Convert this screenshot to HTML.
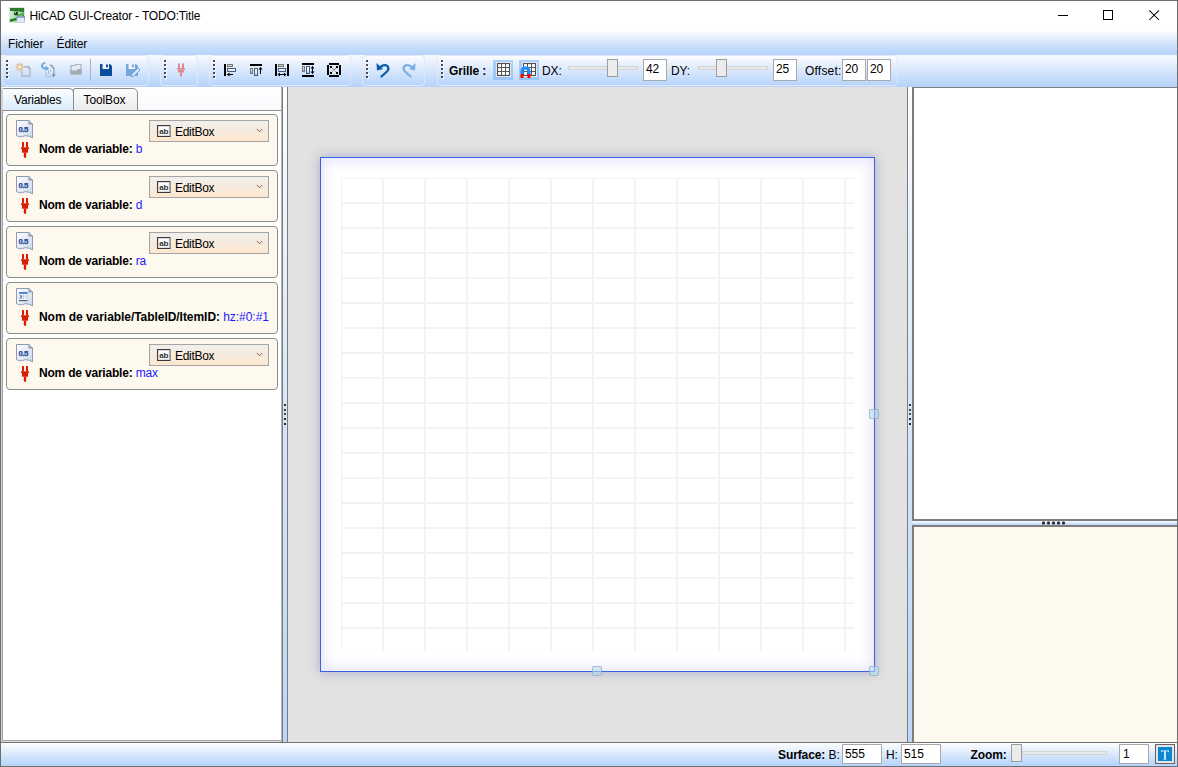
<!DOCTYPE html>
<html><head><meta charset="utf-8">
<style>
*{box-sizing:border-box;margin:0;padding:0}
html,body{width:1178px;height:767px;overflow:hidden;background:#fff}
body{position:relative;font-family:"Liberation Sans",sans-serif;font-size:12px;color:#000;letter-spacing:-0.1px}
.a{position:absolute}
svg.a{overflow:visible}
.t{position:absolute;white-space:nowrap;line-height:12px;height:12px}
.b{font-weight:bold}
.frame{left:0;top:0;width:1178px;height:767px;border:1px solid #6f6f6f;z-index:50;pointer-events:none}
.menubar{left:1px;top:31px;width:1176px;height:24px;background:linear-gradient(#fcfdff 0%,#e3eefd 30%,#c9defb 65%,#b4d3fb 100%)}
.toolbar{left:1px;top:55px;width:1176px;height:32px;background:linear-gradient(#f7fbff 0%,#dce9fc 40%,#b4d3fb 100%)}
.grp{top:0px;height:31px;border:1px solid #e6e6f6;border-radius:4px;background:linear-gradient(#fcfdff 0%,#e6effd 30%,#cfe2fc 65%,#b5d4fb 100%)}
.grip{width:3px;height:19px;background:repeating-linear-gradient(#505050 0 2px,transparent 2px 4px);-webkit-mask:linear-gradient(90deg,#000 2px,transparent 2px)}
.canvas{left:288px;top:87px;width:619px;height:655px;background:#e2e2e2}
.status{left:1px;top:742px;width:1176px;height:24px;border-top:1px solid #747474;background:linear-gradient(#fdfeff 0%,#e8f1fd 30%,#cbe0fc 68%,#b4d4fc 100%)}
.card{left:6px;width:272px;height:52px;border:1px solid #8c8c8c;border-radius:4px;background:#fef9ee}
.dd{left:142px;top:5px;width:120px;height:22px;border:1px solid #a5a5a5;background:linear-gradient(#f1efec,#fce7cf)}
.val{color:#1a1aff}
.tb{position:absolute;background:#fff;border:1px solid #a9a9a9}
.trk{position:absolute;height:4px;background:#e6e8ea;border:1px solid #d4d4d4}
.thumb{position:absolute;width:11px;height:18px;background:#ececec;border:1px solid #9c9c9c}
</style></head>
<body>
<div class="a frame"></div>
<!-- ============ title bar ============ -->
<svg class="a" style="left:9px;top:7px" width="16" height="16" viewBox="0 0 16 16">
  <defs><linearGradient id="gi" x1="0" y1="0" x2="1" y2="1"><stop offset="0" stop-color="#e6f6e6"/><stop offset=".5" stop-color="#b4e0b4"/><stop offset="1" stop-color="#7cc87c"/></linearGradient>
  <linearGradient id="gw" x1="0" y1="0" x2="0" y2="1"><stop offset="0" stop-color="#7f9fc4"/><stop offset="1" stop-color="#c8d4e2"/></linearGradient></defs>
  <rect x="0" y="0" width="16" height="16" fill="#d4eed4"/>
  <rect x="1" y="1" width="14" height="14" fill="url(#gi)"/>
  <path d="M1 1H15V5Q9 4.5 1 4Z" fill="#2f7a2f"/>
  <path d="M8 8Q12 6 15 5V8Q11 9 8 10Z" fill="#3f9a3f" opacity=".7"/>
  <path d="M1 12.5Q7 11 15 8V10Q8 13.5 1 15Z" fill="#2a782a"/>
  <circle cx="7" cy="6.5" r="2.1" fill="#163816"/>
  <circle cx="6.4" cy="5.8" r=".7" fill="#cfe8cf"/>
  <rect x="7.5" y="9" width="8.5" height="7" fill="url(#gw)"/>
  <rect x="8.5" y="11" width="6.5" height="4" fill="#e4eaf2"/>
</svg>
<div class="t" style="left:29.5px;top:9.9px;letter-spacing:-0.17px">HiCAD GUI-Creator - TODO:Title</div>
<div class="a" style="left:1058px;top:15px;width:10px;height:1px;background:#000"></div>
<div class="a" style="left:1103px;top:10px;width:10px;height:10px;border:1px solid #000"></div>
<svg class="a" style="left:1149px;top:10px" width="11" height="11"><path d="M0.3 0.3L10 10M10 0.3L0.3 10" stroke="#000" stroke-width="1.05"/></svg>

<!-- ============ menu ============ -->
<div class="a menubar"></div>
<div class="t" style="left:8px;top:37.9px">Fichier</div>
<div class="t" style="left:56.5px;top:37.9px">Éditer</div>

<!-- ============ toolbar ============ -->
<div class="a toolbar">
  <div class="a grp" style="left:1px;width:147px"></div>
  <div class="a grp" style="left:159px;width:38px"></div>
  <div class="a grp" style="left:208px;width:142px"></div>
  <div class="a grp" style="left:361px;width:63px"></div>
  <div class="a grp" style="left:436px;width:461px"></div>
</div>
<svg class="a" style="left:6px;top:60px" width="4" height="19"><rect x="1" y="1" width="2" height="2" fill="#fff"/><rect x="0" y="0" width="2" height="2" fill="#4a4a4a"/><rect x="1" y="5" width="2" height="2" fill="#fff"/><rect x="0" y="4" width="2" height="2" fill="#4a4a4a"/><rect x="1" y="9" width="2" height="2" fill="#fff"/><rect x="0" y="8" width="2" height="2" fill="#4a4a4a"/><rect x="1" y="13" width="2" height="2" fill="#fff"/><rect x="0" y="12" width="2" height="2" fill="#4a4a4a"/><rect x="1" y="17" width="2" height="2" fill="#fff"/><rect x="0" y="16" width="2" height="2" fill="#4a4a4a"/></svg>
<svg class="a" style="left:164px;top:60px" width="4" height="19"><rect x="1" y="1" width="2" height="2" fill="#fff"/><rect x="0" y="0" width="2" height="2" fill="#4a4a4a"/><rect x="1" y="5" width="2" height="2" fill="#fff"/><rect x="0" y="4" width="2" height="2" fill="#4a4a4a"/><rect x="1" y="9" width="2" height="2" fill="#fff"/><rect x="0" y="8" width="2" height="2" fill="#4a4a4a"/><rect x="1" y="13" width="2" height="2" fill="#fff"/><rect x="0" y="12" width="2" height="2" fill="#4a4a4a"/><rect x="1" y="17" width="2" height="2" fill="#fff"/><rect x="0" y="16" width="2" height="2" fill="#4a4a4a"/></svg>
<svg class="a" style="left:213px;top:60px" width="4" height="19"><rect x="1" y="1" width="2" height="2" fill="#fff"/><rect x="0" y="0" width="2" height="2" fill="#4a4a4a"/><rect x="1" y="5" width="2" height="2" fill="#fff"/><rect x="0" y="4" width="2" height="2" fill="#4a4a4a"/><rect x="1" y="9" width="2" height="2" fill="#fff"/><rect x="0" y="8" width="2" height="2" fill="#4a4a4a"/><rect x="1" y="13" width="2" height="2" fill="#fff"/><rect x="0" y="12" width="2" height="2" fill="#4a4a4a"/><rect x="1" y="17" width="2" height="2" fill="#fff"/><rect x="0" y="16" width="2" height="2" fill="#4a4a4a"/></svg>
<svg class="a" style="left:366px;top:60px" width="4" height="19"><rect x="1" y="1" width="2" height="2" fill="#fff"/><rect x="0" y="0" width="2" height="2" fill="#4a4a4a"/><rect x="1" y="5" width="2" height="2" fill="#fff"/><rect x="0" y="4" width="2" height="2" fill="#4a4a4a"/><rect x="1" y="9" width="2" height="2" fill="#fff"/><rect x="0" y="8" width="2" height="2" fill="#4a4a4a"/><rect x="1" y="13" width="2" height="2" fill="#fff"/><rect x="0" y="12" width="2" height="2" fill="#4a4a4a"/><rect x="1" y="17" width="2" height="2" fill="#fff"/><rect x="0" y="16" width="2" height="2" fill="#4a4a4a"/></svg>
<svg class="a" style="left:441px;top:60px" width="4" height="19"><rect x="1" y="1" width="2" height="2" fill="#fff"/><rect x="0" y="0" width="2" height="2" fill="#4a4a4a"/><rect x="1" y="5" width="2" height="2" fill="#fff"/><rect x="0" y="4" width="2" height="2" fill="#4a4a4a"/><rect x="1" y="9" width="2" height="2" fill="#fff"/><rect x="0" y="8" width="2" height="2" fill="#4a4a4a"/><rect x="1" y="13" width="2" height="2" fill="#fff"/><rect x="0" y="12" width="2" height="2" fill="#4a4a4a"/><rect x="1" y="17" width="2" height="2" fill="#fff"/><rect x="0" y="16" width="2" height="2" fill="#4a4a4a"/></svg>
<!-- icon: new -->
<svg class="a" style="left:14px;top:61px" width="18" height="18" viewBox="0 0 18 18">
  <path d="M10 5.8H14.2L15.8 7.6V15.2H7.8V10" fill="none" stroke="#b3bfcd" stroke-width="1.7" stroke-linejoin="round"/>
  <path d="M13.6 5L16.4 8" stroke="#a6b2c0" stroke-width="1.2"/>
  <g stroke="#dcc08e" stroke-width="1.5" stroke-linecap="round">
    <path d="M5.7 2.2V9.8M1.9 6H9.5M3 3.3L8.4 8.7M8.4 3.3L3 8.7"/>
  </g>
  <circle cx="5.7" cy="6" r="1.5" fill="#fbf3e4"/>
</svg>
<!-- icon: move/copy -->
<svg class="a" style="left:40px;top:61px" width="18" height="18" viewBox="0 0 18 18">
  <path d="M4.5 2Q1.8 2.8 2 5.2Q2.6 7.6 6 7.5" fill="none" stroke="#6aa4dc" stroke-width="1.8" stroke-linecap="round"/>
  <path d="M5.5 4.6L9 7.5L5.5 10.2Z" fill="#6aa4dc"/>
  <path d="M9.5 4.3H11.2L14 8V14.5" fill="none" stroke="#a9b1bb" stroke-width="1.5"/>
  <path d="M11.5 4.3L14 7.5" stroke="#9aa4ae" stroke-width="1.6"/>
  <path d="M6 11V15.5H11" fill="none" stroke="#c0c7d0" stroke-width="1.6"/>
  <rect x="8" y="9.5" width="1" height="1" fill="#8a949e"/><rect x="10" y="9.5" width="1" height="1" fill="#8a949e"/><rect x="8" y="11.5" width="1" height="1" fill="#8a949e"/>
  <rect x="13" y="12.5" width="1" height="4" fill="#7f8a95"/><rect x="11.5" y="13.5" width="4" height="1" fill="#7f8a95"/>
</svg>
<!-- icon: open folder -->
<svg class="a" style="left:68px;top:63px" width="15" height="14" viewBox="0 0 15 14">
  <path d="M3 4V2.5H7L8 1.5H13V11H3Z" fill="#e6ecf4" stroke="#aab2bc" stroke-width="1.2"/>
  <path d="M1.5 7.5H8.5L10 6H13.5V11.5H3Z" fill="#a3abb5"/>
</svg>
<div class="a" style="left:90px;top:59px;width:1px;height:22px;background:#a7b2c2"></div>
<!-- icon: save -->
<svg class="a" style="left:99px;top:63px" width="14" height="14" viewBox="0 0 14 14">
  <path d="M1 1H11L13 3V13H1Z" fill="#0a4f9e"/>
  <rect x="3.5" y="1" width="6.5" height="5" fill="#f2f6fb"/>
  <rect x="7" y="1.5" width="2" height="2.8" fill="#0a4f9e"/>
</svg>
<!-- icon: save as -->
<svg class="a" style="left:125px;top:63px" width="16" height="15" viewBox="0 0 16 15">
  <path d="M1 1H11L13 3V13H1Z" fill="#76a6da"/>
  <rect x="3.5" y="1" width="6.5" height="5" fill="#eef4fb"/>
  <rect x="7" y="1.5" width="2" height="2.8" fill="#76a6da"/>
  <path d="M6 14L7 11L13 5L15 7L9 13Z" fill="#dbe8f6" stroke="#76a6da" stroke-width="1"/>
</svg>
<!-- icon: plug disabled -->
<svg class="a" style="left:177px;top:63px" width="8" height="14" viewBox="0 0 8 14">
  <g fill="#e0878e">
    <rect x="1" y="0.5" width="2" height="4.5"/><rect x="5" y="0.5" width="2" height="4.5"/>
    <rect x="0" y="5" width="8" height="1.5"/><rect x="1" y="6.5" width="6" height="3"/>
    <rect x="3" y="9.5" width="2" height="4"/>
  </g>
</svg>
<!-- align icons -->
<svg class="a" style="left:222px;top:62px" width="16" height="16" viewBox="0 0 16 16">
  <defs>
    <linearGradient id="gg" x1="0" y1="0" x2="0" y2="1"><stop offset="0" stop-color="#ffffff"/><stop offset="1" stop-color="#9a9a9a"/></linearGradient>
    <linearGradient id="gb" x1="0" y1="0" x2="0" y2="1"><stop offset="0" stop-color="#ffffff"/><stop offset=".6" stop-color="#eef2f8"/><stop offset="1" stop-color="#8fa6c4"/></linearGradient>
  </defs>
  <rect x="2" y="2" width="2" height="12" fill="#000"/>
  <rect x="5.5" y="2.5" width="5" height="2" fill="url(#gg)" stroke="#7a7a7a" stroke-width="1"/>
  <rect x="5.5" y="6.5" width="8" height="3" fill="url(#gb)" stroke="#3f5f85" stroke-width="1"/>
  <path d="M5 12.5H11" stroke="#000" stroke-width="1"/><path d="M5 12.5L7.5 10.5V14.5Z" fill="#000"/>
</svg>
<svg class="a" style="left:249px;top:62px" width="15" height="16" viewBox="0 0 15 16">
  <rect x="1" y="2" width="12" height="2" fill="#000"/>
  <rect x="1.5" y="6.5" width="2" height="5" fill="url(#gg)" stroke="#7a7a7a" stroke-width="1"/>
  <rect x="5.5" y="6.5" width="3" height="7" fill="url(#gb)" stroke="#3f5f85" stroke-width="1"/>
  <path d="M11.5 5.5V12" stroke="#000" stroke-width="1"/><path d="M9.5 7.5L11.5 5L13.5 7.5Z" fill="#000"/>
</svg>
<svg class="a" style="left:273px;top:62px" width="18" height="16" viewBox="0 0 18 16">
  <rect x="2" y="2" width="2" height="12" fill="#000"/><rect x="14" y="2" width="2" height="12" fill="#000"/>
  <rect x="5.5" y="2.5" width="5" height="2" fill="url(#gg)" stroke="#7a7a7a" stroke-width="1"/>
  <rect x="5.5" y="6.5" width="7" height="3" fill="url(#gb)" stroke="#3f5f85" stroke-width="1"/>
  <path d="M5 12.5H13" stroke="#000" stroke-width="1"/><path d="M4.5 12.5L7 10.5V14.5Z M13.5 12.5L11 10.5V14.5Z" fill="#000"/>
</svg>
<svg class="a" style="left:300px;top:62px" width="16" height="16" viewBox="0 0 16 16">
  <rect x="2" y="1" width="12" height="2" fill="#000"/><rect x="2" y="13" width="12" height="2" fill="#000"/>
  <rect x="2.5" y="4.5" width="2" height="5" fill="url(#gg)" stroke="#7a7a7a" stroke-width="1"/>
  <rect x="6.5" y="4.5" width="3" height="7" fill="url(#gb)" stroke="#3f5f85" stroke-width="1"/>
  <path d="M12.5 4.5V11.5" stroke="#000" stroke-width="1"/><path d="M10.5 6.5L12.5 4L14.5 6.5Z M10.5 9.5L12.5 12L14.5 9.5Z" fill="#000"/>
</svg>
<svg class="a" style="left:326px;top:62px" width="16" height="16" viewBox="0 0 16 16">
  <rect x="3" y="1" width="10" height="2" fill="#000"/><rect x="3" y="13" width="10" height="2" fill="#000"/>
  <rect x="1" y="3" width="2" height="10" fill="#000"/><rect x="13" y="3" width="2" height="10" fill="#000"/>
  <rect x="4" y="4" width="8" height="8" fill="#dfe6ef"/>
  <path d="M4.5 4.5L11.5 11.5M11.5 4.5L4.5 11.5" stroke="#555" stroke-width="1" stroke-dasharray="1 1"/>
  <rect x="4" y="4" width="2" height="2" fill="#000"/><rect x="10" y="4" width="2" height="2" fill="#000"/>
  <rect x="4" y="10" width="2" height="2" fill="#000"/><rect x="10" y="10" width="2" height="2" fill="#000"/>
</svg>
<!-- undo / redo -->
<svg class="a" style="left:375px;top:62px" width="16" height="16" viewBox="0 0 16 16">
  <path d="M5 5.2Q9.5 1.5 12.6 4.2Q14.5 6.5 12 9.5L6.5 14.5" fill="none" stroke="#0b5cb0" stroke-width="2.2" stroke-linecap="round"/>
  <path d="M1.5 1L2 8.5L8 7Z" fill="#0b5cb0"/>
</svg>
<svg class="a" style="left:401px;top:62px" width="16" height="16" viewBox="0 0 16 16">
  <path d="M11 5.2Q6.5 1.5 3.4 4.2Q1.5 6.5 4 9.5L9.5 14.5" fill="none" stroke="#7eaee0" stroke-width="2.2" stroke-linecap="round"/>
  <path d="M14.5 1L14 8.5L8 7Z" fill="#7eaee0"/>
</svg>
<!-- grille -->
<div class="t b" style="left:449px;top:65px">Grille :</div>
<div class="a" style="left:493px;top:60px;width:20px;height:20px;background:linear-gradient(#acd0fa,#9ac5f7)"></div>
<div class="a" style="left:519px;top:60px;width:20px;height:20px;background:linear-gradient(#acd0fa,#9ac5f7)"></div>
<svg class="a" style="left:496px;top:62px" width="15" height="15" viewBox="0 0 15 15">
  <rect x="0" y="0" width="15" height="15" fill="#fff" opacity=".85"/>
  <rect x="1.5" y="1.5" width="12" height="12" fill="#fff" stroke="#505050" stroke-width="1.2"/>
  <path d="M5.5 1.5V13.5M9.5 1.5V13.5M1.5 5.5H13.5M1.5 9.5H13.5" stroke="#555" stroke-width="1"/>
</svg>
<svg class="a" style="left:522px;top:62px" width="15" height="17" viewBox="0 0 15 17">
  <rect x="0" y="0" width="15" height="15" fill="#fff" opacity=".85"/>
  <rect x="1.5" y="1.5" width="12" height="12" fill="#fff" stroke="#505050" stroke-width="1.2"/>
  <path d="M5.5 1.5V13.5M9.5 1.5V13.5M1.5 5.5H13.5M1.5 9.5H13.5" stroke="#555" stroke-width="1"/>
  <path d="M-1.5 12V9.5Q-1.5 4.5 3.5 4.5Q8.5 4.5 8.5 9.5V12H5.5V9.5Q5.5 7.5 3.5 7.5Q1.5 7.5 1.5 9.5V12Z" fill="#1a8cff"/>
  <rect x="-1.5" y="12" width="3" height="4" fill="#f00"/><rect x="5.5" y="12" width="3" height="4" fill="#f00"/>
</svg>
<div class="t" style="left:542px;top:65px">DX:</div>
<div class="trk" style="left:568px;top:66px;width:70px"></div>
<div class="thumb" style="left:607px;top:59px"></div>
<div class="tb" style="left:643px;top:59px;width:24px;height:22px"></div>
<div class="t" style="left:646px;top:63px">42</div>
<div class="t" style="left:671px;top:65px">DY:</div>
<div class="trk" style="left:698px;top:66px;width:70px"></div>
<div class="thumb" style="left:716px;top:59px"></div>
<div class="tb" style="left:773px;top:59px;width:24px;height:22px"></div>
<div class="t" style="left:776px;top:63px">25</div>
<div class="t" style="left:805px;top:65px;letter-spacing:0.2px">Offset:</div>
<div class="tb" style="left:842px;top:59px;width:24px;height:22px"></div>
<div class="t" style="left:845px;top:63px">20</div>
<div class="tb" style="left:867px;top:59px;width:24px;height:22px"></div>
<div class="t" style="left:870px;top:63px">20</div>
<!-- ============ left panel ============ -->
<div class="a" style="left:2px;top:87px;width:280px;height:24px;background:linear-gradient(#fff,#f8fafd)"></div>
<div class="a" style="left:1px;top:87px;width:1px;height:655px;background:#d0d0d0"></div>
<div class="a" style="left:2px;top:110px;width:281px;height:631px;border-top:1px solid #8e8e8e;border-left:1px solid #a4a4a4;border-bottom:1px solid #a8a8a8;background:#fff"></div>
<div class="a" style="left:281px;top:87px;width:1px;height:655px;background:#b0b0b0"></div><div class="a" style="left:282px;top:87px;width:1px;height:655px;background:#7c7c7c"></div><div class="a" style="left:2px;top:741px;width:279px;height:1px;background:#dadada"></div>
<div class="a" style="left:73px;top:88px;width:65px;height:23px;border:1px solid #8c8c8c;border-radius:2px 5px 0 0;background:linear-gradient(#fdfdfd,#ececec)"></div>
<div class="a" style="left:2px;top:88px;width:72px;height:22px;border:1px solid #8c8c8c;border-left-color:#d4d4d4;border-bottom:none;border-radius:2px 5px 0 0;background:linear-gradient(#fbfdff,#dbecfc)"></div>
<div class="t" style="left:14px;top:93.9px;letter-spacing:-0.2px">Variables</div>
<div class="t" style="left:83.5px;top:93.9px">ToolBox</div>

<!-- cards -->
<div class="a card" style="top:114px"></div>
<div class="a card" style="top:170px"></div>
<div class="a card" style="top:226px"></div>
<div class="a card" style="top:282px"></div>
<div class="a card" style="top:338px"></div>
<svg class="a" style="left:16px;top:120px" width="18" height="19" viewBox="0 0 18 19">
<defs><linearGradient id="pg114" x1="0" y1="0" x2="1" y2="1"><stop offset="0" stop-color="#ffffff"/><stop offset="1" stop-color="#c9d6ea"/></linearGradient></defs>
<path d="M0.5 0.5H13L16.5 4V18Q14 16.2 11 15.8Q8.5 15.5 6.5 16.6Q3.5 17.6 0.5 15.6Z" fill="url(#pg114)" stroke="#8d9cb3" stroke-width="1"/>
<path d="M13 0.5V4H16.5" fill="#b7c3d6" stroke="#7d8ba3" stroke-width="1"/>
<text x="2.4" y="11.6" font-family="Liberation Sans" font-weight="bold" font-size="7.8" letter-spacing="-0.5" fill="#2848a0" stroke="#2848a0" stroke-width=".25">0.5</text>
</svg><svg class="a" style="left:20px;top:142px" width="10" height="16" viewBox="0 0 10 16"><g fill="#dc1c00">
<rect x="2" y="0" width="2" height="5.5"/><rect x="6" y="0" width="2" height="5.5"/>
<rect x="1" y="5.3" width="8" height="1.8"/><rect x="2" y="7" width="6" height="3.7"/><rect x="3.8" y="10.5" width="2.4" height="5.2"/></g></svg><div class="a dd" style="left:149px;top:120px;width:120px;height:22px"></div>
<svg class="a" style="left:157px;top:125px" width="14" height="12" viewBox="0 0 14 12"><rect x="0.5" y="0.5" width="12.5" height="11" fill="#fafafa" stroke="#3a3a3a" stroke-width="1"/><rect x="1.5" y="1.5" width="10.5" height="9" fill="none" stroke="#d8d8d8" stroke-width=".8"/><text x="2.3" y="9" font-family="Liberation Sans" font-weight="bold" font-size="8" letter-spacing="-0.3" fill="#333">ab</text></svg>
<div class="t" style="left:175px;top:125.84px;letter-spacing:-0.3px">EditBox</div>
<svg class="a" style="left:256px;top:128px" width="7" height="5" viewBox="0 0 7 5"><path d="M0.8 1L3.5 3.7L6.2 1" fill="none" stroke="#555" stroke-width="0.9"/></svg>
<div class="t b" style="left:39px;top:142.84px;letter-spacing:-0.2px"><span>Nom de variable:</span> <span class="val" style="font-weight:normal">b</span></div>
<svg class="a" style="left:16px;top:176px" width="18" height="19" viewBox="0 0 18 19">
<defs><linearGradient id="pg170" x1="0" y1="0" x2="1" y2="1"><stop offset="0" stop-color="#ffffff"/><stop offset="1" stop-color="#c9d6ea"/></linearGradient></defs>
<path d="M0.5 0.5H13L16.5 4V18Q14 16.2 11 15.8Q8.5 15.5 6.5 16.6Q3.5 17.6 0.5 15.6Z" fill="url(#pg170)" stroke="#8d9cb3" stroke-width="1"/>
<path d="M13 0.5V4H16.5" fill="#b7c3d6" stroke="#7d8ba3" stroke-width="1"/>
<text x="2.4" y="11.6" font-family="Liberation Sans" font-weight="bold" font-size="7.8" letter-spacing="-0.5" fill="#2848a0" stroke="#2848a0" stroke-width=".25">0.5</text>
</svg><svg class="a" style="left:20px;top:198px" width="10" height="16" viewBox="0 0 10 16"><g fill="#dc1c00">
<rect x="2" y="0" width="2" height="5.5"/><rect x="6" y="0" width="2" height="5.5"/>
<rect x="1" y="5.3" width="8" height="1.8"/><rect x="2" y="7" width="6" height="3.7"/><rect x="3.8" y="10.5" width="2.4" height="5.2"/></g></svg><div class="a dd" style="left:149px;top:176px;width:120px;height:22px"></div>
<svg class="a" style="left:157px;top:181px" width="14" height="12" viewBox="0 0 14 12"><rect x="0.5" y="0.5" width="12.5" height="11" fill="#fafafa" stroke="#3a3a3a" stroke-width="1"/><rect x="1.5" y="1.5" width="10.5" height="9" fill="none" stroke="#d8d8d8" stroke-width=".8"/><text x="2.3" y="9" font-family="Liberation Sans" font-weight="bold" font-size="8" letter-spacing="-0.3" fill="#333">ab</text></svg>
<div class="t" style="left:175px;top:181.84px;letter-spacing:-0.3px">EditBox</div>
<svg class="a" style="left:256px;top:184px" width="7" height="5" viewBox="0 0 7 5"><path d="M0.8 1L3.5 3.7L6.2 1" fill="none" stroke="#555" stroke-width="0.9"/></svg>
<div class="t b" style="left:39px;top:198.84px;letter-spacing:-0.2px"><span>Nom de variable:</span> <span class="val" style="font-weight:normal">d</span></div>
<svg class="a" style="left:16px;top:232px" width="18" height="19" viewBox="0 0 18 19">
<defs><linearGradient id="pg226" x1="0" y1="0" x2="1" y2="1"><stop offset="0" stop-color="#ffffff"/><stop offset="1" stop-color="#c9d6ea"/></linearGradient></defs>
<path d="M0.5 0.5H13L16.5 4V18Q14 16.2 11 15.8Q8.5 15.5 6.5 16.6Q3.5 17.6 0.5 15.6Z" fill="url(#pg226)" stroke="#8d9cb3" stroke-width="1"/>
<path d="M13 0.5V4H16.5" fill="#b7c3d6" stroke="#7d8ba3" stroke-width="1"/>
<text x="2.4" y="11.6" font-family="Liberation Sans" font-weight="bold" font-size="7.8" letter-spacing="-0.5" fill="#2848a0" stroke="#2848a0" stroke-width=".25">0.5</text>
</svg><svg class="a" style="left:20px;top:254px" width="10" height="16" viewBox="0 0 10 16"><g fill="#dc1c00">
<rect x="2" y="0" width="2" height="5.5"/><rect x="6" y="0" width="2" height="5.5"/>
<rect x="1" y="5.3" width="8" height="1.8"/><rect x="2" y="7" width="6" height="3.7"/><rect x="3.8" y="10.5" width="2.4" height="5.2"/></g></svg><div class="a dd" style="left:149px;top:232px;width:120px;height:22px"></div>
<svg class="a" style="left:157px;top:237px" width="14" height="12" viewBox="0 0 14 12"><rect x="0.5" y="0.5" width="12.5" height="11" fill="#fafafa" stroke="#3a3a3a" stroke-width="1"/><rect x="1.5" y="1.5" width="10.5" height="9" fill="none" stroke="#d8d8d8" stroke-width=".8"/><text x="2.3" y="9" font-family="Liberation Sans" font-weight="bold" font-size="8" letter-spacing="-0.3" fill="#333">ab</text></svg>
<div class="t" style="left:175px;top:237.84px;letter-spacing:-0.3px">EditBox</div>
<svg class="a" style="left:256px;top:240px" width="7" height="5" viewBox="0 0 7 5"><path d="M0.8 1L3.5 3.7L6.2 1" fill="none" stroke="#555" stroke-width="0.9"/></svg>
<div class="t b" style="left:39px;top:254.84px;letter-spacing:-0.2px"><span>Nom de variable:</span> <span class="val" style="font-weight:normal">ra</span></div>
<svg class="a" style="left:16px;top:288px" width="18" height="19" viewBox="0 0 18 19">
<defs><linearGradient id="pt282" x1="0" y1="0" x2="1" y2="1"><stop offset="0" stop-color="#ffffff"/><stop offset="1" stop-color="#c9d6ea"/></linearGradient></defs>
<path d="M0.5 0.5H13L16.5 4V18Q14 16.2 11 15.8Q8.5 15.5 6.5 16.6Q3.5 17.6 0.5 15.6Z" fill="url(#pt282)" stroke="#8d9cb3" stroke-width="1"/>
<path d="M13 0.5V4H16.5" fill="#b7c3d6" stroke="#7d8ba3" stroke-width="1"/>
<rect x="3" y="5.5" width="8.5" height="7" fill="#f2f4f8" stroke="#c0c6d0" stroke-width=".6"/>
<rect x="3" y="4" width="8.5" height="1.8" fill="#4a7ad8"/>
<rect x="3" y="12" width="8.5" height="1.2" fill="#56626e"/>
<rect x="4" y="7" width="2" height="3.8" fill="#6e9ce8"/><rect x="4" y="8.5" width="2.6" height="0.8" fill="#6e9ce8"/>
<rect x="7.2" y="6" width=".8" height="6" fill="#c4cad2"/>
<rect x="8.5" y="7" width="2.2" height="3.5" fill="#d6dce6"/>
</svg><svg class="a" style="left:20px;top:310px" width="10" height="16" viewBox="0 0 10 16"><g fill="#dc1c00">
<rect x="2" y="0" width="2" height="5.5"/><rect x="6" y="0" width="2" height="5.5"/>
<rect x="1" y="5.3" width="8" height="1.8"/><rect x="2" y="7" width="6" height="3.7"/><rect x="3.8" y="10.5" width="2.4" height="5.2"/></g></svg>
<div class="t b" style="left:39px;top:310.84px;letter-spacing:-0.05px"><span>Nom de variable/TableID/ItemID:</span> <span class="val" style="font-weight:normal">hz:#0:#1</span></div>
<svg class="a" style="left:16px;top:344px" width="18" height="19" viewBox="0 0 18 19">
<defs><linearGradient id="pg338" x1="0" y1="0" x2="1" y2="1"><stop offset="0" stop-color="#ffffff"/><stop offset="1" stop-color="#c9d6ea"/></linearGradient></defs>
<path d="M0.5 0.5H13L16.5 4V18Q14 16.2 11 15.8Q8.5 15.5 6.5 16.6Q3.5 17.6 0.5 15.6Z" fill="url(#pg338)" stroke="#8d9cb3" stroke-width="1"/>
<path d="M13 0.5V4H16.5" fill="#b7c3d6" stroke="#7d8ba3" stroke-width="1"/>
<text x="2.4" y="11.6" font-family="Liberation Sans" font-weight="bold" font-size="7.8" letter-spacing="-0.5" fill="#2848a0" stroke="#2848a0" stroke-width=".25">0.5</text>
</svg><svg class="a" style="left:20px;top:366px" width="10" height="16" viewBox="0 0 10 16"><g fill="#dc1c00">
<rect x="2" y="0" width="2" height="5.5"/><rect x="6" y="0" width="2" height="5.5"/>
<rect x="1" y="5.3" width="8" height="1.8"/><rect x="2" y="7" width="6" height="3.7"/><rect x="3.8" y="10.5" width="2.4" height="5.2"/></g></svg><div class="a dd" style="left:149px;top:344px;width:120px;height:22px"></div>
<svg class="a" style="left:157px;top:349px" width="14" height="12" viewBox="0 0 14 12"><rect x="0.5" y="0.5" width="12.5" height="11" fill="#fafafa" stroke="#3a3a3a" stroke-width="1"/><rect x="1.5" y="1.5" width="10.5" height="9" fill="none" stroke="#d8d8d8" stroke-width=".8"/><text x="2.3" y="9" font-family="Liberation Sans" font-weight="bold" font-size="8" letter-spacing="-0.3" fill="#333">ab</text></svg>
<div class="t" style="left:175px;top:349.84px;letter-spacing:-0.3px">EditBox</div>
<svg class="a" style="left:256px;top:352px" width="7" height="5" viewBox="0 0 7 5"><path d="M0.8 1L3.5 3.7L6.2 1" fill="none" stroke="#555" stroke-width="0.9"/></svg>
<div class="t b" style="left:39px;top:366.84px;letter-spacing:-0.2px"><span>Nom de variable:</span> <span class="val" style="font-weight:normal">max</span></div>


<!-- ============ splitters + canvas ============ -->
<div class="a" style="left:283px;top:87px;width:4px;height:655px;background:linear-gradient(#fdfeff 0%,#d8e8fb 45%,#bcd6f9 100%)"></div>
<div class="a" style="left:287px;top:87px;width:1px;height:655px;background:#7c7c7c"></div>
<div class="a canvas"></div>
<svg class="a" style="left:284px;top:404px" width="3" height="22">
<rect x="0" y="0" width="2" height="2" fill="#3a3a3a"/><rect x="0" y="5" width="2" height="2" fill="#3a3a3a"/><rect x="0" y="9" width="2" height="2" fill="#4a4a4a"/><rect x="0" y="14" width="2" height="2" fill="#2a2a2a"/><rect x="0" y="19" width="2" height="2" fill="#2a2a2a"/></svg>
<div class="a" style="left:320px;top:157px;width:555px;height:515px;border:1px solid #3b63df;background:#fff;box-shadow:0 0 10px 1px rgba(75,82,165,0.33), inset 0 0 14px 2px rgba(198,200,248,0.55)"><div class="a" style="left:20px;top:20px;width:1px;height:473px;background:#f3f3f3"></div><div class="a" style="left:61px;top:20px;width:2px;height:473px;background:#f3f3f3"></div><div class="a" style="left:103px;top:20px;width:2px;height:473px;background:#f3f3f3"></div><div class="a" style="left:145px;top:20px;width:2px;height:473px;background:#f3f3f3"></div><div class="a" style="left:187px;top:20px;width:2px;height:473px;background:#f3f3f3"></div><div class="a" style="left:229px;top:20px;width:2px;height:473px;background:#f3f3f3"></div><div class="a" style="left:271px;top:20px;width:2px;height:473px;background:#f3f3f3"></div><div class="a" style="left:313px;top:20px;width:2px;height:473px;background:#f3f3f3"></div><div class="a" style="left:355px;top:20px;width:2px;height:473px;background:#f3f3f3"></div><div class="a" style="left:397px;top:20px;width:2px;height:473px;background:#f3f3f3"></div><div class="a" style="left:439px;top:20px;width:2px;height:473px;background:#f3f3f3"></div><div class="a" style="left:481px;top:20px;width:2px;height:473px;background:#f3f3f3"></div><div class="a" style="left:523px;top:20px;width:2px;height:473px;background:#f3f3f3"></div><div class="a" style="left:20px;top:20px;width:513px;height:1px;background:#f3f3f3"></div><div class="a" style="left:20px;top:44px;width:513px;height:2px;background:#f3f3f3"></div><div class="a" style="left:20px;top:69px;width:513px;height:2px;background:#f3f3f3"></div><div class="a" style="left:20px;top:94px;width:513px;height:2px;background:#f3f3f3"></div><div class="a" style="left:20px;top:119px;width:513px;height:2px;background:#f3f3f3"></div><div class="a" style="left:20px;top:144px;width:513px;height:2px;background:#f3f3f3"></div><div class="a" style="left:20px;top:169px;width:513px;height:2px;background:#f3f3f3"></div><div class="a" style="left:20px;top:194px;width:513px;height:2px;background:#f3f3f3"></div><div class="a" style="left:20px;top:219px;width:513px;height:2px;background:#f3f3f3"></div><div class="a" style="left:20px;top:244px;width:513px;height:2px;background:#f3f3f3"></div><div class="a" style="left:20px;top:269px;width:513px;height:2px;background:#f3f3f3"></div><div class="a" style="left:20px;top:294px;width:513px;height:2px;background:#f3f3f3"></div><div class="a" style="left:20px;top:319px;width:513px;height:2px;background:#f3f3f3"></div><div class="a" style="left:20px;top:344px;width:513px;height:2px;background:#f3f3f3"></div><div class="a" style="left:20px;top:369px;width:513px;height:2px;background:#f3f3f3"></div><div class="a" style="left:20px;top:394px;width:513px;height:2px;background:#f3f3f3"></div><div class="a" style="left:20px;top:419px;width:513px;height:2px;background:#f3f3f3"></div><div class="a" style="left:20px;top:444px;width:513px;height:2px;background:#f3f3f3"></div><div class="a" style="left:20px;top:469px;width:513px;height:2px;background:#f3f3f3"></div>

</div>
<div class="a" style="left:869px;top:409px;width:10px;height:10px;border:1px solid rgba(150,150,150,0.55);border-radius:2px;background:rgba(175,222,252,0.55)"></div>
<div class="a" style="left:592px;top:666px;width:10px;height:10px;border:1px solid rgba(150,150,150,0.55);border-radius:2px;background:rgba(175,222,252,0.55)"></div>
<div class="a" style="left:869px;top:666px;width:10px;height:10px;border:1px solid rgba(150,150,150,0.55);border-radius:2px;background:rgba(175,222,252,0.55)"></div>
<div class="a" style="left:907px;top:87px;width:1px;height:655px;background:#7c7c7c"></div>
<div class="a" style="left:908px;top:87px;width:4px;height:655px;background:linear-gradient(#fdfeff 0%,#d8e8fb 45%,#bcd6f9 100%)"></div>
<div class="a" style="left:912px;top:87px;width:2px;height:655px;background:#7c7c7c"></div>
<svg class="a" style="left:909px;top:404px" width="3" height="22">
<rect x="0" y="0" width="2" height="2" fill="#3a3a3a"/><rect x="0" y="5" width="2" height="2" fill="#3a3a3a"/><rect x="0" y="9" width="2" height="2" fill="#4a4a4a"/><rect x="0" y="14" width="2" height="2" fill="#2a2a2a"/><rect x="0" y="19" width="2" height="2" fill="#2a2a2a"/></svg>
<!-- ============ right panel ============ -->
<div class="a" style="left:914px;top:87px;width:263px;height:432px;border-top:1px solid #808080;background:#fff"></div>
<div class="a" style="left:912px;top:519px;width:265px;height:2px;background:#7e7e7e"></div>
<div class="a" style="left:912px;top:521px;width:265px;height:4px;background:linear-gradient(#fafcff,#b9d5f9)"></div>
<div class="a" style="left:912px;top:525px;width:265px;height:2px;background:#7e7e7e"></div>
<svg class="a" style="left:1042px;top:521px" width="24" height="4">
<rect x="0" y="0.5" width="3" height="3" rx="1" fill="#2a2a2a"/><rect x="5" y="0.5" width="3" height="3" rx="1" fill="#2a2a2a"/><rect x="10" y="0.5" width="3" height="3" rx="1" fill="#2a2a2a"/><rect x="15" y="0.5" width="3" height="3" rx="1" fill="#2a2a2a"/><rect x="20" y="0.5" width="3" height="3" rx="1" fill="#2a2a2a"/></svg>
<div class="a" style="left:914px;top:527px;width:263px;height:215px;background:#fef9ee"></div>
<!-- ============ status bar ============ -->
<div class="a status"></div>
<div class="t b" style="left:778px;top:749.3px">Surface:</div>
<div class="t" style="left:828.5px;top:749.3px">B:</div>
<div class="tb" style="left:842px;top:744px;width:40px;height:20px"></div>
<div class="t" style="left:845px;top:748px">555</div>
<div class="t" style="left:886px;top:749.3px">H:</div>
<div class="tb" style="left:901px;top:744px;width:40px;height:20px"></div>
<div class="t" style="left:904px;top:748px">515</div>
<div class="t b" style="left:970.5px;top:749.3px">Zoom:</div>
<div class="trk" style="left:1022px;top:751px;width:85px;height:4px"></div>
<div class="thumb" style="left:1011px;top:744px;width:11px;height:18px"></div>
<div class="tb" style="left:1119px;top:744px;width:30px;height:20px"></div>
<div class="t" style="left:1123px;top:748px">1</div>
<div class="a" style="left:1155px;top:744px;width:20px;height:20px;border:1px solid #646464;background:#e4e4e4;padding:2px"><div style="width:14px;height:14px;background:#0b86d6;position:relative">
<svg style="position:absolute;left:0;top:0" width="14" height="14" viewBox="0 0 14 14"><path d="M3 3.5H11V5.3H10.6Q10.4 4.2 9.2 4.2H7.8V11.6Q7.8 12 8.6 12.1V12.6H5.4V12.1Q6.2 12 6.2 11.6V4.2H4.8Q3.6 4.2 3.4 5.3H3Z" fill="#fff"/></svg></div></div>

</body></html>
